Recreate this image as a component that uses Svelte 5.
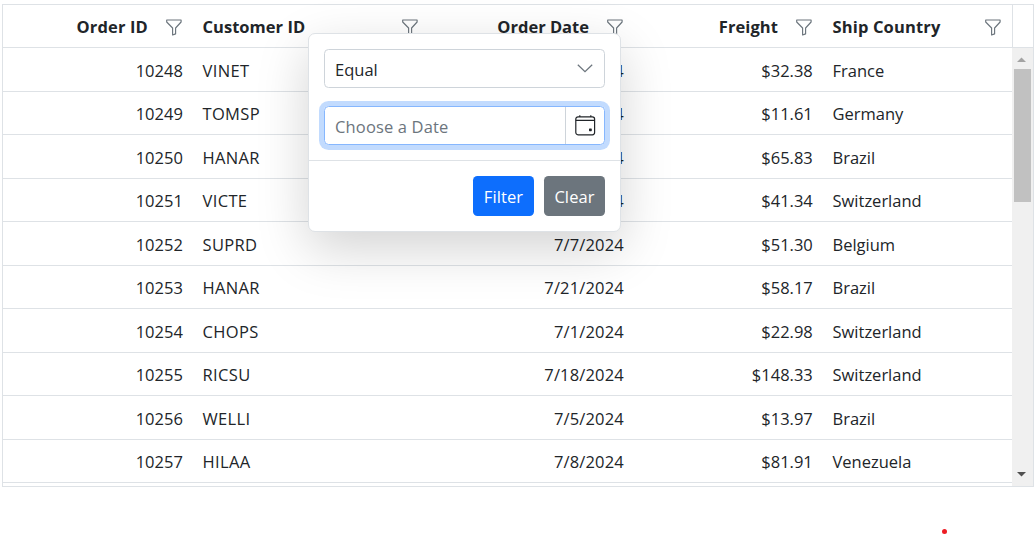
<script>
  const columns = [
    { title: 'Order ID', key: 'id', right: true, spacing: 0.15 },
    { title: 'Customer ID', key: 'customer', right: false, spacing: 0.03 },
    { title: 'Order Date', key: 'date', right: true, spacing: 0 },
    { title: 'Freight', key: 'freight', right: true, spacing: 0.08 },
    { title: 'Ship Country', key: 'country', right: false, spacing: 0.15 }
  ];
  const rows = [
    { id: '10248', customer: 'VINET', date: '4', freight: '$32.38', country: 'France' },
    { id: '10249', customer: 'TOMSP', date: '4', freight: '$11.61', country: 'Germany' },
    { id: '10250', customer: 'HANAR', date: '4', freight: '$65.83', country: 'Brazil' },
    { id: '10251', customer: 'VICTE', date: '4', freight: '$41.34', country: 'Switzerland' },
    { id: '10252', customer: 'SUPRD', date: '7/7/2024', freight: '$51.30', country: 'Belgium' },
    { id: '10253', customer: 'HANAR', date: '7/21/2024', freight: '$58.17', country: 'Brazil' },
    { id: '10254', customer: 'CHOPS', date: '7/1/2024', freight: '$22.98', country: 'Switzerland' },
    { id: '10255', customer: 'RICSU', date: '7/18/2024', freight: '$148.33', country: 'Switzerland' },
    { id: '10256', customer: 'WELLI', date: '7/5/2024', freight: '$13.97', country: 'Brazil' },
    { id: '10257', customer: 'HILAA', date: '7/8/2024', freight: '$81.91', country: 'Venezuela' }
  ];
</script>

<main>
  <div class="grid">
    <div class="head">
      <div class="line">
        {#each columns as col}
          <div class="th" class:right={col.right}>
            <span class="title" style:letter-spacing="{col.spacing}px">{col.title}</span>
            <svg class="funnel" width="16" height="17" viewBox="0 0 16 17">
              <path d="M.7 1h14.4v2L9.600 9v5.900l-3 1.100V9L.7 3z" fill="none" stroke="#6c757d" stroke-width="1.15" stroke-linejoin="round" />
            </svg>
          </div>
        {/each}
      </div>
      <div class="corner"></div>
    </div>
    <div class="content">
      <div class="body">
        {#each rows as row}
          <div class="line row">
            {#each columns as col}
              <div class="td {col.key}" class:right={col.right}>{row[col.key]}</div>
            {/each}
          </div>
        {/each}
      </div>
      <div class="scroll">
        <svg width="20" height="21" viewBox="0 0 20 21"><path d="M5 14L9.500 9.500l4.500 4.500z" fill="#a3a3a3" /></svg>
        <div class="thumb"></div>
        <svg class="down" width="20" height="21" viewBox="0 0 20 21"><path d="M5 7L9.500 11.500L14 7z" fill="#505050" /></svg>
      </div>
    </div>
  </div>

  <div class="popup">
    <div class="fields">
      <div class="field">
        <span class="value">Equal</span>
        <svg width="16" height="10" viewBox="0 0 16 10"><path d="M.8 .7L8 7.700l7.200-7" fill="none" stroke="#6c757d" stroke-width="1.25" /></svg>
      </div>
      <div class="field focus">
        <span class="value hint">Choose a Date</span>
        <div class="cal">
          <svg width="21" height="21" viewBox="0 0 21 21">
            <rect x=".8" y="1.800" width="18.800" height="18" rx="2.2" fill="none" stroke="#212529" stroke-width="1.2" />
            <path d="M.8 5.300H19.600M4.800 .3V2M15.800 .3V2" fill="none" stroke="#212529" stroke-width="1.2" />
            <rect x="14" y="13.400" width="2.800" height="2.800" rx=".6" fill="#212529" />
          </svg>
        </div>
      </div>
    </div>
    <div class="actions">
      <button class="primary">Filter</button>
      <button class="clear">Clear</button>
    </div>
  </div>
  <div class="dot"></div>
</main>

<style>
  :global(body) { background: #fff; overflow: hidden; }
  main {
    position: relative;
    box-sizing: border-box;
    width: 1035px;
    height: 535px;
    padding: 4px 1px 0 2px;
    color: #212529;
    font: 16.5px/24px "Open Sans", "Noto Sans", sans-serif;
  }
  .grid {
    box-sizing: border-box;
    width: 1032px;
    height: 483px;
    border: 1px solid #dee2e6;
    display: flex;
    flex-direction: column;
  }
  .head { display: flex; height: 42px; border-bottom: 1px solid #dee2e6; }
  .corner { width: 20px; border-left: 1px solid #dee2e6; }
  .line { width: 1009px; display: grid; grid-template-columns: 190px 236px 205px 189px 189px; }
  .th { display: flex; align-items: center; justify-content: space-between; padding: 1px 11px 0 9.500px; font-weight: 700; white-space: nowrap; }
  .th.right { justify-content: flex-end; gap: 18px; }
  .funnel { flex: none; margin-top: 1px; }
  .content { flex: 1; display: flex; min-height: 0; overflow: hidden; }
  .body { width: 1009px; overflow: hidden; }
  .row { box-sizing: border-box; height: 43.5px; border-bottom: 1px solid #dee2e6; }
  .td { padding: 10.600px 10px 0 9.500px; white-space: nowrap; }
  .td.right { padding-right: 10.200px; text-align: right; }
  .customer { letter-spacing: .35px; }
  .td.date { letter-spacing: .15px; }
  .scroll { width: 21px; background: #f0f0f0; display: flex; flex-direction: column; }
  .scroll svg { flex: none; display: block; }
  .thumb { width: 17px; height: 133px; margin-left: 2px; background: #c1c1c1; }
  .down { margin-top: auto; }
  .popup {
    position: absolute;
    left: 308px;
    top: 33px;
    box-sizing: border-box;
    width: 313px;
    height: 199px;
    border: 1px solid #dee2e6;
    border-radius: 7px;
    background: #fff;
    box-shadow: 0 17px 52px rgba(0, 0, 0, .175);
  }
  .fields { height: 127px; padding: 15px; box-sizing: border-box; border-bottom: 1px solid #dee2e6; display: flex; flex-direction: column; gap: 18px; }
  .field { flex: none; box-sizing: border-box; height: 39px; border: 1px solid #ced4da; border-radius: 4.500px; display: flex; align-items: center; justify-content: space-between; padding: 0 11px 0 10px; }
  .value { position: relative; top: 1px; }
  .hint { color: #6c757d; letter-spacing: .15px; }
  .focus { border-color: #86b7fe; box-shadow: 0 0 0 5px rgba(13, 110, 253, .25); padding-right: 0; }
  .cal { width: 38px; height: 100%; border-left: 1px solid #ced4da; display: flex; align-items: center; justify-content: center; }
  .actions { display: flex; justify-content: flex-end; gap: 10px; padding: 15px 15px 0; }
  button { width: 61px; height: 40px; border: 0; border-radius: 4.500px; padding: 1px 0 0; color: #fff; background: #0d6efd; font: inherit; letter-spacing: .1px; }
  .clear { background: #6c757d; }
  .dot { position: absolute; left: 942px; top: 529px; width: 5px; height: 5px; border-radius: 50%; background: #ed1c24; }
</style>
